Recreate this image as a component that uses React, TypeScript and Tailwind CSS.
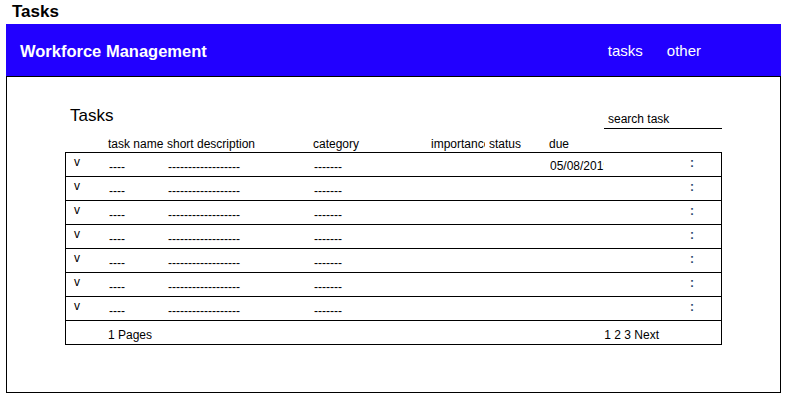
import React from 'react';

const rows = [
  { due: '05/08/2019' },
  { due: '' },
  { due: '' },
  { due: '' },
  { due: '' },
  { due: '' },
  { due: '' },
];

const cols = 'grid grid-cols-[43px_59px_146px_118px_58px_60px_54px_1fr]';

const App = () => {
  return (
    <div className="w-[791px] h-[401px] bg-white text-black font-['Liberation_Sans',Arial,sans-serif]">
      <h1 className="h-[24px] pl-[12px] text-[17px] leading-[24px] font-bold">Tasks</h1>

      <div className="ml-[6px] w-[775px]">
        {/* top bar */}
        <div className="flex h-[53px] items-center bg-[#2200ff] border-b border-black pl-[14px] pr-[80px] pt-[2px] text-white">
          <span className="text-[16.5px] font-bold">Workforce Management</span>
          <nav className="ml-auto flex gap-[24px] text-[15px]">
            <span>tasks</span>
            <span>other</span>
          </nav>
        </div>

        <div className="h-[316px] border-x border-b border-black pt-[29px]">
          <div className="ml-[58px] w-[657px]">
            <div className="flex items-start justify-between">
              <h2 className="ml-[5px] text-[17px] leading-[20px]">Tasks</h2>
              <div className="mt-[6px] w-[118px] border-b border-black pb-[2px] pl-[4px] text-[12px] leading-[14px]">
                search task
              </div>
            </div>

            <div className={`${cols} mt-[8px] mb-[1px] text-[12px] leading-[14px]`}>
              <span />
              <span>task name</span>
              <span>short description</span>
              <span>category</span>
              <span className="w-[54px] overflow-hidden whitespace-nowrap">importance</span>
              <span>status</span>
              <span>due</span>
              <span />
            </div>

            <div className="border-x border-t border-black text-[12px] leading-[14px]">
              {rows.map((r, i) => (
                <div key={i} className={`${cols} h-[24px] border-b border-black`}>
                  <span className="pl-[8px] pt-[2px]">v</span>
                  <span className="pt-[7px]">----</span>
                  <span className="pt-[7px]">------------------</span>
                  <span className="pt-[7px]">-------</span>
                  <span />
                  <span />
                  <span className="pt-[6px] overflow-hidden whitespace-nowrap">{r.due}</span>
                  <span className="pl-[86px] pt-[3px] font-bold text-[#2d4a6e]">:</span>
                </div>
              ))}
              <div className="flex h-[24px] items-center border-b border-black pl-[42px] pr-[62px] pt-[4px]">
                <span>1 Pages</span>
                <span className="ml-auto">1 2 3 Next</span>
              </div>
            </div>
          </div>
        </div>
      </div>
    </div>
  );
};

export default App;
